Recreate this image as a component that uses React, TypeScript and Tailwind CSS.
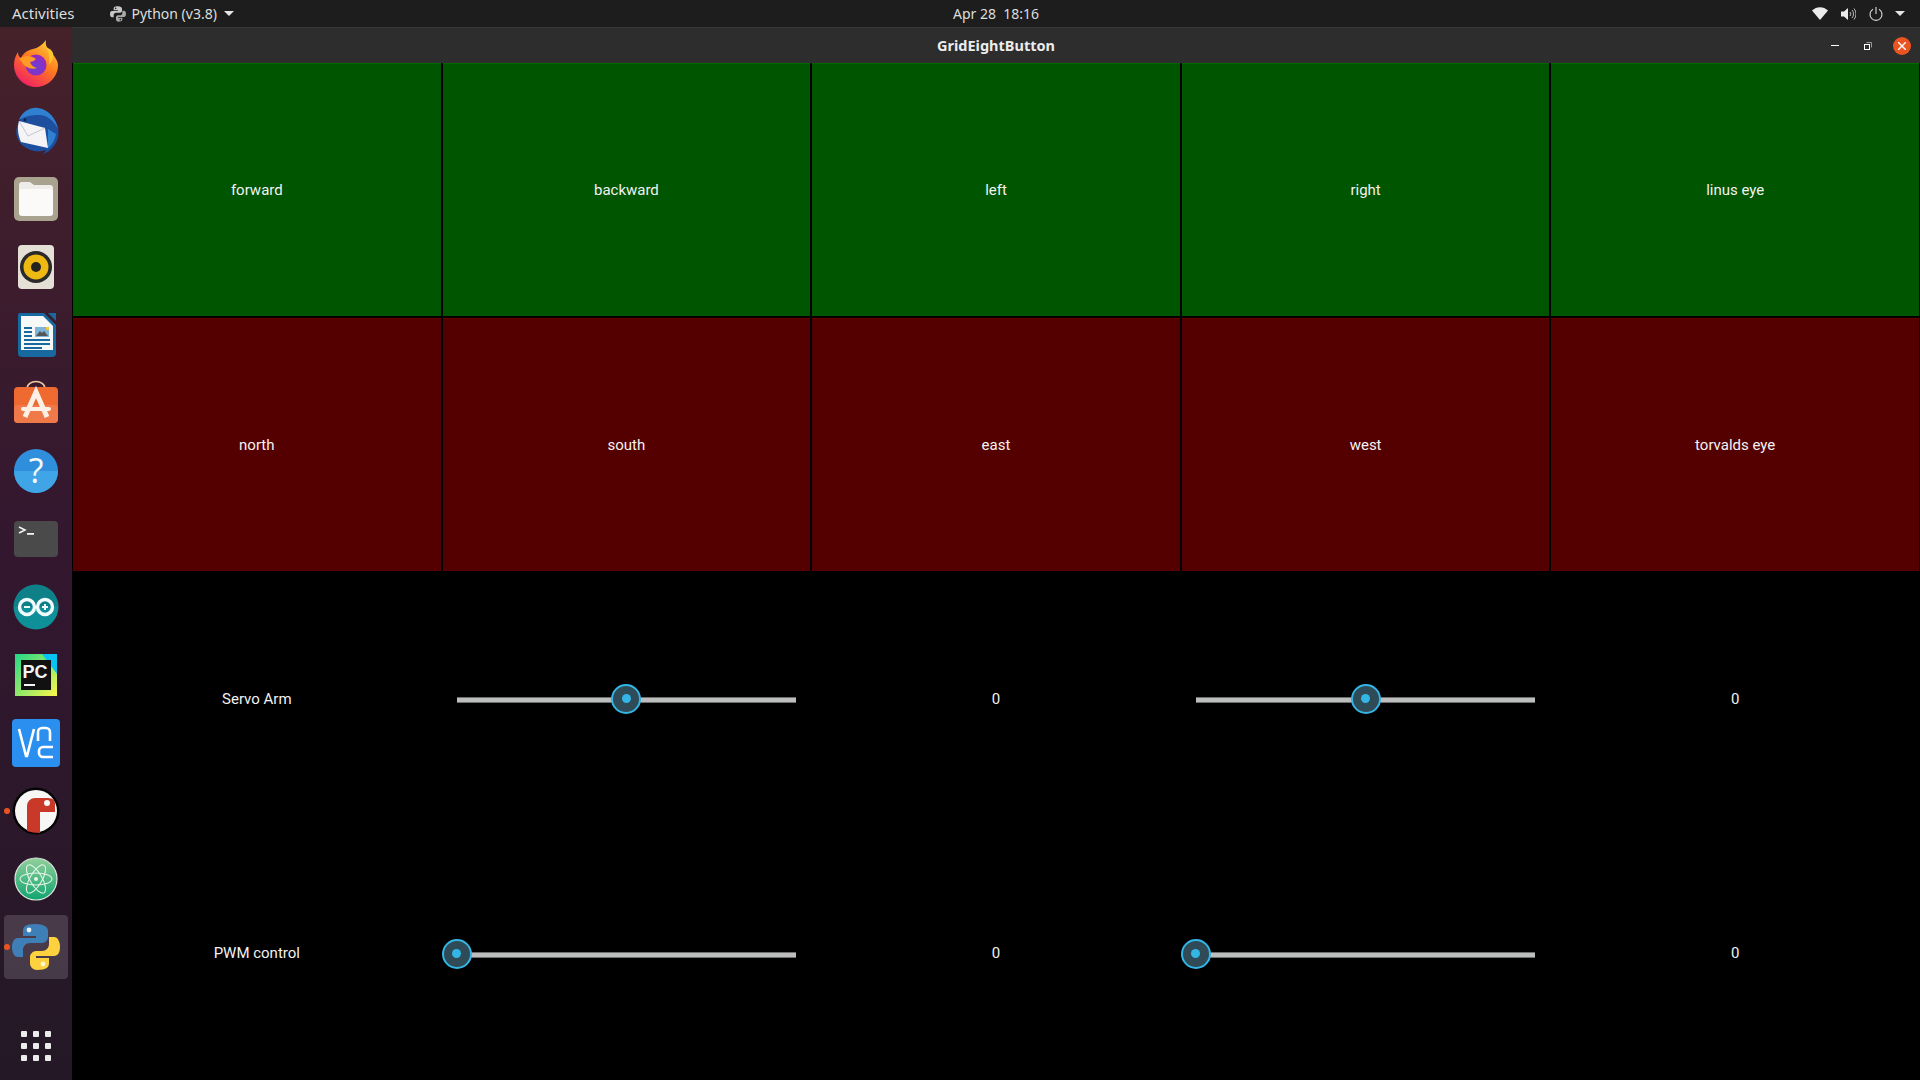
const FirefoxIcon = () => (
  <svg width="48" height="48" viewBox="0 0 48 48">
    <defs>
      <linearGradient id="ff1" x1="0.8" y1="0" x2="0.2" y2="1">
        <stop offset="0" stopColor="#ffd23a" />
        <stop offset="0.45" stopColor="#ff7a1f" />
        <stop offset="1" stopColor="#f0186a" />
      </linearGradient>
      <radialGradient id="ff2" cx="0.5" cy="0.6" r="0.6">
        <stop offset="0" stopColor="#6a3fd6" />
        <stop offset="1" stopColor="#9a28b8" />
      </radialGradient>
    </defs>
    <path d="M34 1c-1 5 1 8 5 12 4 5 7 9 7 13 0 12-10 22-22 22S2 38 2 26c0-6 2-10 4-13 0 3 1 5 3 6 2-5 7-8 12-9 5-1 9-4 13-9z" fill="url(#ff1)" />
    <circle cx="24" cy="26" r="10.5" fill="url(#ff2)" />
    <path d="M7 20c5-4 12-4 17 0-2 2-4 3-6 3 1 3 3 5 7 6-6 2-13-1-15-6-1-1-2-2-3-3z" fill="#ff9a24" />
    <path d="M33 8c4 4 5 11 4 18 3-4 5-8 4-12-1-3-4-5-8-6z" fill="#ffc42e" />
  </svg>
);

const ThunderbirdIcon = () => (
  <svg width="48" height="48" viewBox="0 0 48 48">
    <path d="M12 8C18 2 34 1 42 12c6 8 6 19 0 27-3 4-7 7-12 8 2-1 3-2 4-4-8 3-17 1-24-5C2 30 2 18 12 8z" fill="#1d4f9e" />
    <path d="M7 13C10 5 18 0 26 1c10 1 18 10 20 21-4-8-11-14-19-14-7 0-14 1-20 5z" fill="#2f80d0" />
    <path d="M7 14 33 21 36 41 9 35c-3-7-4-14-2-21z" fill="#f4f4f6" />
    <path d="M7 14 16 29 33 21" fill="none" stroke="#b8bcc4" strokeWidth="0.8" />
    <path d="M36 41c4-3 7-8 8-14l-8-5z" fill="#2f80d0" />
    <circle cx="13" cy="13" r="1.4" fill="#0b2246" />
  </svg>
);

const FilesIcon = () => (
  <svg width="48" height="48" viewBox="0 0 48 48">
    <rect x="2" y="2" width="44" height="44" rx="5" fill="#a9a28f" />
    <path d="M7 10a3 3 0 0 1 3-3h8l4 3h16a3 3 0 0 1 3 3v24a3 3 0 0 1-3 3H10a3 3 0 0 1-3-3z" fill="#efedea" />
    <rect x="7" y="14" width="34" height="27" rx="3" fill="#fbfaf9" />
  </svg>
);

const RhythmboxIcon = () => (
  <svg width="48" height="48" viewBox="0 0 48 48">
    <rect x="6" y="2" width="36" height="44" rx="4" fill="#e4e0d6" />
    <circle cx="24" cy="24" r="16" fill="#2a2a2a" />
    <circle cx="24" cy="24" r="12.5" fill="#eeb913" />
    <circle cx="24" cy="24" r="5" fill="#24231f" />
  </svg>
);

const WriterIcon = () => (
  <svg width="48" height="48" viewBox="0 0 48 48">
    <path d="M8 2h24l12 12v28a4 4 0 0 1-4 4H10a4 4 0 0 1-4-4V4a2 2 0 0 1 2-2z" fill="#17699f" />
    <path d="M9 5h22l10 10v24H9z" fill="#f7f8f8" />
    <path d="M36 2h8v8z" fill="#17699f" />
    <rect x="12" y="16" width="8" height="2" fill="#17699f" />
    <rect x="12" y="20" width="8" height="2" fill="#17699f" />
    <rect x="12" y="24" width="8" height="2" fill="#17699f" />
    <rect x="12" y="28" width="26" height="2" fill="#17699f" />
    <rect x="12" y="32" width="26" height="2" fill="#17699f" />
    <rect x="12" y="36" width="18" height="2" fill="#17699f" />
    <rect x="23" y="16" width="14" height="10" fill="#7fb4d8" />
    <path d="M24 25l4-5 2 2 2-2 4 5z" fill="#555" />
    <rect x="34" y="16" width="3" height="3" fill="#f5c242" />
  </svg>
);

const StoreIcon = () => (
  <svg width="48" height="48" viewBox="0 0 48 48">
    <path d="M15 10c0-10 18-10 18 0" fill="none" stroke="#f0c9a0" strokeWidth="1.6" />
    <rect x="2" y="8" width="44" height="36" rx="4" fill="#ef6a30" />
    <rect x="2" y="26" width="44" height="18" rx="4" fill="#f0794a" />
    <path d="M13 38 24 13l11 25" fill="none" stroke="#fdf0e6" strokeWidth="5" />
    <rect x="9" y="28" width="30" height="4" rx="2" fill="#fdf0e6" />
  </svg>
);

const HelpIcon = () => (
  <svg width="48" height="48" viewBox="0 0 48 48">
    <circle cx="24" cy="24" r="22" fill="#2f8fdc" />
    <path d="M2 24a22 22 0 0 0 44 0z" fill="#3fa5e6" />
    <text x="24" y="36" textAnchor="middle" fontSize="34" fontFamily="Open Sans, sans-serif" fill="#f4f8fb">?</text>
  </svg>
);

const TerminalIcon = () => (
  <svg width="48" height="48" viewBox="0 0 48 48">
    <rect x="2" y="6" width="44" height="36" rx="4" fill="#4a4a4a" />
    <path d="M7 12l6 3-6 3" fill="none" stroke="#f2f2f2" strokeWidth="1.6" />
    <rect x="15" y="18" width="7" height="1.8" fill="#f2f2f2" />
  </svg>
);

const ArduinoIcon = () => (
  <svg width="48" height="48" viewBox="0 0 48 48">
    <circle cx="24" cy="24" r="22.5" fill="#0f8f98" />
    <path d="M2 24a22 22 0 0 1 44 0z" fill="#0d8088" />
    <circle cx="15" cy="24" r="7.5" fill="none" stroke="#f2fbfb" strokeWidth="3.4" />
    <circle cx="33" cy="24" r="7.5" fill="none" stroke="#f2fbfb" strokeWidth="3.4" />
    <rect x="12" y="23" width="6" height="2" fill="#f2fbfb" />
    <rect x="30" y="23" width="6" height="2" fill="#f2fbfb" />
    <rect x="32" y="21" width="2" height="6" fill="#f2fbfb" />
  </svg>
);

const PyCharmIcon = () => (
  <svg width="48" height="48" viewBox="0 0 48 48">
    <defs>
      <linearGradient id="pc1" x1="0" y1="0" x2="1" y2="1">
        <stop offset="0" stopColor="#21d789" />
        <stop offset="1" stopColor="#fcf84a" />
      </linearGradient>
    </defs>
    <rect x="3" y="3" width="42" height="42" fill="url(#pc1)" />
    <path d="M30 3h15v20z" fill="#07c3f2" />
    <rect x="9" y="9" width="30" height="30" fill="#111" />
    <text x="10.5" y="27" fontSize="18" fontWeight="700" fontFamily="Liberation Sans, sans-serif" fill="#f4f4f4">PC</text>
    <rect x="12" y="33" width="11" height="2" fill="#f4f4f4" />
  </svg>
);

const VncIcon = () => (
  <svg width="48" height="48" viewBox="0 0 48 48">
    <rect x="0" y="0" width="48" height="48" rx="4" fill="#2b8ff0" />
    <path d="M7 10l7 27h1l7-27" fill="none" stroke="#fff" strokeWidth="2.6" />
    <path d="M26 22v-9a4 4 0 0 1 4-4h4a4 4 0 0 1 4 4v9" fill="none" stroke="#fff" strokeWidth="2.6" />
    <path d="M41 28h-10a4 4 0 0 0-4 4v2a4 4 0 0 0 4 4h10" fill="none" stroke="#fff" strokeWidth="2.6" />
  </svg>
);

const RedIcon = () => (
  <svg width="48" height="48" viewBox="0 0 48 48">
    <circle cx="24" cy="24" r="23.5" fill="#050505" />
    <circle cx="24" cy="24" r="21" fill="#f7f7f5" />
    <path d="M15 44V19a8 8 0 0 1 8-8h13c5 0 7 3 7 5v9H28v21c-5 0-9-1-13-2z" fill="#c8392a" />
    <circle cx="35" cy="16" r="3" fill="#f7f7f5" />
  </svg>
);

const AtomIcon = () => (
  <svg width="48" height="48" viewBox="0 0 48 48">
    <defs>
      <linearGradient id="atom1" x1="0" y1="0" x2="0" y2="1">
        <stop offset="0" stopColor="#93cf9a" />
        <stop offset="1" stopColor="#0fa56f" />
      </linearGradient>
    </defs>
    <circle cx="24" cy="24" r="21" fill="url(#atom1)" stroke="#dfe9e2" strokeWidth="1.2" />
    <g fill="none" stroke="#e6f4ea" strokeWidth="1.1">
      <ellipse cx="24" cy="24" rx="16" ry="6" />
      <ellipse cx="24" cy="24" rx="16" ry="6" transform="rotate(60 24 24)" />
      <ellipse cx="24" cy="24" rx="16" ry="6" transform="rotate(120 24 24)" />
    </g>
    <circle cx="24" cy="24" r="2" fill="#e6f4ea" />
  </svg>
);

const PythonLogo = ({ size = 48, mono = false }: { size?: number; mono?: boolean }) => (
  <svg width={size} height={size} viewBox="0 0 48 48">
    <path
      d="M23 1c-10 0-12 3-12 7v5h13v2H6c-4 0-6 4-6 9s2 10 6 10h5v-7c0-4 3-7 7-7h12c3 0 6-3 6-6V8c0-4-4-7-13-7z"
      fill={mono ? "#c8c8c8" : "#3f7fb8"}
    />
    <path
      d="M25 47c10 0 12-3 12-7v-5H24v-2h18c4 0 6-4 6-9s-2-10-6-10h-5v7c0 4-3 7-7 7H24c-3 0-6 3-6 6v6c0 4 3 7 7 7z"
      fill={mono ? "#a8a8a8" : "#fdd23e"}
    />
    <circle cx="17" cy="7" r="2.4" fill={mono ? "#1d1d1d" : "#e8f0f6"} />
    <circle cx="31" cy="41" r="2.4" fill={mono ? "#1d1d1d" : "#fff6d0"} />
  </svg>
);

const dockIcons = [
  { icon: <FirefoxIcon /> },
  { icon: <ThunderbirdIcon /> },
  { icon: <FilesIcon /> },
  { icon: <RhythmboxIcon /> },
  { icon: <WriterIcon /> },
  { icon: <StoreIcon /> },
  { icon: <HelpIcon /> },
  { icon: <TerminalIcon /> },
  { icon: <ArduinoIcon /> },
  { icon: <PyCharmIcon /> },
  { icon: <VncIcon /> },
  { icon: <RedIcon />, running: true },
  { icon: <AtomIcon /> },
  { icon: <PythonLogo />, running: true, active: true },
];

function Dock() {
  return (
    <aside className="flex w-[72px] shrink-0 flex-col bg-gradient-to-b from-[#45212a] via-[#33172f] to-[#241826] pt-[2px]">
      {dockIcons.map((item, i) => (
        <div key={i} className="relative flex h-[68px] items-center justify-center">
          {item.active && <div className="absolute inset-x-1 inset-y-[2px] rounded bg-white/15" />}
          {item.running && (
            <div className="absolute left-[4px] top-1/2 h-[6px] w-[6px] -translate-y-1/2 rounded-full bg-[#e95420]" />
          )}
          <div className="relative flex">{item.icon}</div>
        </div>
      ))}
      <div className="mt-auto flex h-[68px] items-center justify-center">
        <div className="grid grid-cols-3 gap-[6px]">
          {Array.from({ length: 9 }).map((_, i) => (
            <div key={i} className="h-[6px] w-[6px] rounded-[1px] bg-[#ececec]" />
          ))}
        </div>
      </div>
    </aside>
  );
}

function TopBar() {
  return (
    <header className="relative flex h-[27px] shrink-0 items-center bg-[#1d1d1d] font-['Noto_Sans',sans-serif] text-[14px] text-[#dedede]">
      <span className="ml-3 text-[15px]">Activities</span>
      <div className="ml-[35px] flex items-center">
        <PythonLogo size={16} mono />
        <span className="ml-[6px]">Python (v3.8)</span>
        <div className="ml-[7px] h-0 w-0 border-x-[5px] border-t-[5px] border-x-transparent border-t-[#e6e6e6]" />
      </div>
      <span className="absolute left-[953px] whitespace-pre">Apr 28  18:16</span>
      <div className="ml-auto mr-[15px] flex items-center">
        <svg width="16" height="13" viewBox="0 0 16 13">
          <path d="M0 3.5C4.5-1 11.5-1 16 3.5L8 13z" fill="#ececec" />
        </svg>
        <svg className="ml-[13px]" width="15" height="14" viewBox="0 0 15 14" fill="none">
          <path d="M0 4.5h3L7 1v12L3 9.5H0z" fill="#ececec" />
          <path d="M9 5a3 3 0 0 1 0 4M11 3a6 6 0 0 1 0 8M13 1.5a8.5 8.5 0 0 1 0 11" stroke="#b9b9b9" strokeWidth="1" />
        </svg>
        <svg className="ml-[13px]" width="14" height="14" viewBox="0 0 14 14" fill="none" stroke="#dcdcdc" strokeWidth="1.1">
          <path d="M4 2.2a6 6 0 1 0 6 0" />
          <path d="M7 0v7" />
        </svg>
        <div className="ml-[12px] h-0 w-0 border-x-[5px] border-t-[5px] border-x-transparent border-t-[#e6e6e6]" />
      </div>
    </header>
  );
}

function TitleBar() {
  return (
    <div className="relative flex h-[36px] shrink-0 items-center justify-center border-t border-[#3a3a3a] bg-[#2d2d2d]">
      <span className="font-['Noto_Sans',sans-serif] text-[14.5px] font-bold text-[#ececec]">GridEightButton</span>
      <div className="absolute right-[9px] top-0 flex h-full items-center">
        <div className="h-px w-2 bg-white" />
        <svg className="ml-[25px]" width="8" height="8" viewBox="0 0 8 8" fill="none">
          <path d="M2.5.5h5v5" stroke="#9a9a9a" />
          <rect x="0.5" y="2.5" width="5" height="5" stroke="#fff" />
        </svg>
        <div className="ml-[21px] flex h-[18px] w-[18px] items-center justify-center rounded-full bg-[#e95420]">
          <svg width="8" height="8" viewBox="0 0 8 8" stroke="#fff" strokeWidth="1.4">
            <path d="M0 0l8 8M8 0L0 8" />
          </svg>
        </div>
      </div>
    </div>
  );
}

function GridButton({ label, tone }: { label: string; tone: "green" | "red" }) {
  return (
    <button
      className={
        tone === "green"
          ? "flex items-center justify-center border-t border-[#006a00] bg-[#005500] pt-px text-[15px] text-[#f2f2f2]"
          : "flex items-center justify-center border-t border-[#6a0000] bg-[#550000] pt-px text-[15px] text-[#f2f2f2]"
      }
    >
      {label}
    </button>
  );
}

function Slider({ atStart }: { atStart?: boolean }) {
  return (
    <div className="flex items-center justify-center px-[14px] pt-[2px]">
      <div className="relative h-[6px] w-full border-y border-[#6b6f70] bg-[#bdbdbd]">
        <div
          className={
            atStart
              ? "absolute left-0 top-1/2 flex h-[30px] w-[30px] -translate-x-1/2 -translate-y-[16px] items-center justify-center rounded-full border-2 border-[#33b5e5] bg-[#2f4b57]"
              : "absolute left-1/2 top-1/2 flex h-[30px] w-[30px] -translate-x-1/2 -translate-y-[16px] items-center justify-center rounded-full border-2 border-[#33b5e5] bg-[#2f4b57]"
          }
        >
          <div className="h-[9px] w-[9px] rounded-full bg-[#33b5e5]" />
        </div>
      </div>
    </div>
  );
}

const Value = ({ children }: { children: string }) => (
  <div className="flex items-center justify-center text-[15px] text-[#f2f2f2]">{children}</div>
);

export default function App() {
  return (
    <div className="flex h-screen w-full flex-col overflow-hidden bg-black font-['Roboto',sans-serif]">
      <TopBar />
      <div className="flex min-h-0 flex-1">
        <Dock />
        <main className="flex min-w-0 flex-1 flex-col pl-px pr-px">
          <div className="-ml-px -mr-px">
            <TitleBar />
          </div>
          <div className="grid flex-1 grid-cols-5 grid-rows-4 gap-[2px]">
            {["forward", "backward", "left", "right", "linus eye"].map((l) => (
              <GridButton key={l} label={l} tone="green" />
            ))}
            {["north", "south", "east", "west", "torvalds eye"].map((l) => (
              <GridButton key={l} label={l} tone="red" />
            ))}
            <Value>Servo Arm</Value>
            <Slider />
            <Value>0</Value>
            <Slider />
            <Value>0</Value>
            <Value>PWM control</Value>
            <Slider atStart />
            <Value>0</Value>
            <Slider atStart />
            <Value>0</Value>
          </div>
        </main>
      </div>
    </div>
  );
}
